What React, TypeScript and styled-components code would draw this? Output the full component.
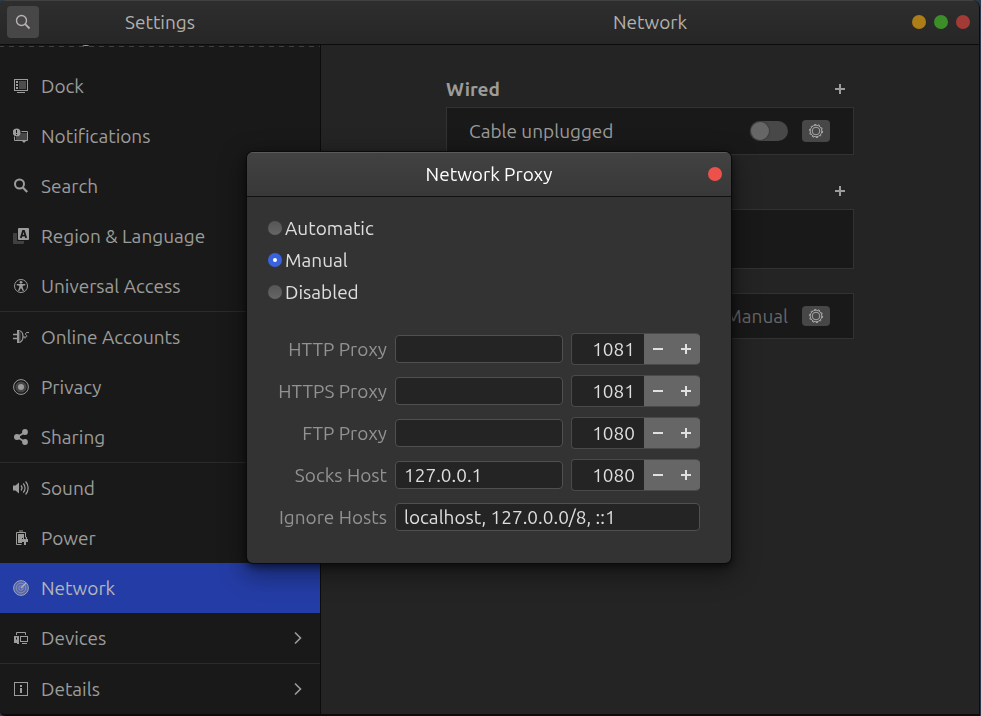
import React, { useState } from 'react';
import styled, { createGlobalStyle, css } from 'styled-components';

const GlobalStyle = createGlobalStyle`
  * { box-sizing: border-box; }
  body {
    margin: 0;
    background: #2b3a4c;
    font-family: Ubuntu, "Noto Sans", sans-serif;
    font-size: 19px;
    line-height: 24px;
    color: #9c9c9a;
  }
  button, input { font: inherit; color: inherit; margin: 0; }
  button { padding: 0; border: 0; background: none; }
`;

const Window = styled.div`
  display: grid;
  grid-template: 45px minmax(0, 1fr) / 321px minmax(0, 1fr);
  height: 100vh;
  margin-right: 1px;
  overflow: hidden;
  background: #242424;
  border-right: 1px solid #0c0c0c;
  border-bottom: 2px solid #0c0c0c;
  border-radius: 5px 8px 0 5px;
`;

const HeaderBar = styled.header<{ $main?: boolean }>`
  display: grid;
  grid-template-columns: ${p => (p.$main ? '58px 1fr 58px' : '32px 1fr 32px')};
  align-items: center;
  padding: ${p => (p.$main ? '0 9px 1px' : '0 8px 1px 7px')};
  background: linear-gradient(#2e2e2e, #262626);
  border-top: 1px solid #414141;
  border-bottom: 1px solid #0c0c0c;
`;

const Title = styled.h1<{ $bright?: boolean }>`
  grid-column: 2;
  margin: 0;
  font-size: 19px;
  font-weight: 400;
  text-align: center;
  color: ${p => (p.$bright ? '#ffffff' : '#b2b1ae')};
`;

const SearchButton = styled.button`
  display: grid;
  place-items: center;
  height: 32px;
  border-radius: 4px;
  background: #474747;
  color: #b4b3b0;
`;

const WindowControls = styled.div`
  grid-column: 3;
  display: flex;
  gap: 8px;
`;

const Dot = styled.button<{ $color: string }>`
  width: 14px;
  height: 14px;
  border-radius: 50%;
  background: ${p => p.$color};
`;

const Sidebar = styled.nav`
  position: relative;
  overflow: hidden;
  background: #191919;
  border-right: 1px solid #0c0c0c;
`;

const Undershoot = styled.div`
  position: absolute;
  top: 1px;
  left: 0;
  right: 0;
  height: 1px;
  background: repeating-linear-gradient(90deg, #404040 0 4px, transparent 4px 9px, #404040 9px 10px);
`;

/* The list is scrolled so that its first row is mostly out of view. */
const NavList = styled.ul`
  margin: -34px 0 0;
  padding: 0;
  list-style: none;
`;

const NavItem = styled.li<{ $divided?: boolean }>`
  ${p => p.$divided && css`border-top: 1px solid #2b2b2b;`}
`;

const NavLink = styled.a<{ $active?: boolean }>`
  display: grid;
  grid-template-columns: 16px 1fr 16px;
  gap: 12px;
  align-items: center;
  height: 50px;
  padding: 0 15px 0 13px;
  text-decoration: none;
  color: ${p => (p.$active ? '#b3b5bb' : '#9c9c9a')};
  background: ${p => (p.$active ? '#243da6' : 'transparent')};
`;

const Main = styled.main`
  display: flex;
  flex-direction: column;
  padding: 26px 16px;
  background: #242424;
`;

const Column = styled.div`
  width: 100%;
  max-width: 408px;
  margin: 0 auto;
`;

const Section = styled.section<{ $gap?: number }>`
  margin-top: ${p => p.$gap ?? 0}px;
`;

const SectionHead = styled.div`
  display: flex;
  align-items: center;
  justify-content: space-between;
  height: 36px;
  padding-right: 8px;
`;

const SectionTitle = styled.h2`
  margin: 0;
  font-size: 19px;
  font-weight: 700;
`;

const AddButton = styled.button`
  display: grid;
  place-items: center;
  width: 12px;
  height: 12px;
  margin-left: auto;
`;

const Panel = styled.div<{ $height: number }>`
  display: flex;
  align-items: center;
  gap: 14px;
  min-height: ${p => p.$height}px;
  padding: 0 23px 0 22px;
  background: #191919;
  border: 1px solid #323232;
`;

const Label = styled.span`
  flex: 1;
`;

const Value = styled.span`
  margin-left: auto;
  color: #676767;
`;

const Switch = styled.input`
  appearance: none;
  display: flex;
  align-items: center;
  width: 38px;
  height: 20px;
  border-radius: 10px;
  background: #484848;
  &::before {
    content: '';
    width: 18px;
    height: 18px;
    margin: 0 1px;
    border-radius: 50%;
    background: #666666;
    box-shadow: 0 0 1px 1px #3c3c3c;
  }
  &:checked { justify-content: flex-end; background: #243da6; }
`;

const GearButton = styled.button`
  display: grid;
  place-items: center;
  align-self: stretch;
  width: 28px;
  margin: 12px 0;
  border-radius: 4px;
  background: #474747;
  color: #a6a6a4;
`;

const Overlay = styled.div`
  position: fixed;
  inset: 0;
  display: grid;
  place-items: center;
  padding: 0 3px 1px 0;
`;

const Dialog = styled.section`
  width: 484px;
  max-width: 100%;
  overflow: hidden;
  border-radius: 6px;
  background: #333333;
  color: #dededc;
  box-shadow: 0 0 0 1px #0a0a0a, 0 3px 8px rgba(0, 0, 0, 0.6), 0 8px 24px 4px rgba(0, 0, 0, 0.4);
`;

const DialogHeader = styled.header`
  display: grid;
  grid-template-columns: 14px 1fr 14px;
  align-items: center;
  height: 45px;
  padding: 0 9px 1px;
  background: linear-gradient(#424242, #383838);
  border-top: 1px solid #5a5a5a;
  border-bottom: 1px solid #121212;
`;

const DialogBody = styled.form`
  padding: 15px 31px 30px 21px;
`;

const RadioGroup = styled.fieldset`
  margin: 0 0 25px;
  padding: 0;
  border: 0;
`;

const RadioLabel = styled.label`
  display: flex;
  align-items: center;
  gap: 3px;
  height: 32px;
`;

const Radio = styled.input`
  appearance: none;
  display: grid;
  place-items: center;
  width: 14px;
  height: 14px;
  border-radius: 50%;
  background: linear-gradient(#555555, #666666);
  &:checked { background: #3a62dc; }
  &:checked::before {
    content: '';
    width: 4px;
    height: 4px;
    border-radius: 50%;
    background: #ffffff;
  }
`;

const Fields = styled.div`
  display: grid;
  grid-template-columns: 1fr 168px 129px;
  grid-auto-rows: 32px;
  gap: 10px 8px;
  align-items: center;
`;

const FieldLabel = styled.label`
  text-align: right;
  white-space: nowrap;
  color: #929290;
`;

const TextBox = styled.input<{ $wide?: boolean }>`
  grid-column: ${p => (p.$wide ? 'span 2' : 'auto')};
  width: 100%;
  height: 28px;
  padding: 0 8px;
  border: 1px solid #505050;
  border-radius: 4px;
  background: #242424;
  outline: none;
`;

const Spin = styled.div`
  display: grid;
  grid-template-columns: 1fr 28px 28px;
  height: 32px;
  overflow: hidden;
  border: 1px solid #4a4a4a;
  border-right: 0;
  border-radius: 4px;
  background: #242424;
`;

const SpinInput = styled.input`
  width: 100%;
  min-width: 0;
  padding: 0 9px 0 0;
  border: 0;
  background: transparent;
  text-align: right;
  outline: none;
`;

const SpinButton = styled.button`
  display: grid;
  place-items: center;
  background: #666666;
  color: #e0e0de;
`;

const Svg = ({ size = 16, children }: { size?: number; children: React.ReactNode }) => (
  <svg width={size} height={size} viewBox={`0 0 ${size} ${size}`} fill="none" stroke="currentColor" aria-hidden="true">
    {children}
  </svg>
);

const fill = { fill: 'currentColor', stroke: 'none' };

const DockIcon = () => (
  <Svg>
    <rect x="1.5" y="1.5" width="13" height="11" />
    <path {...fill} d="M3 3h2v2H3zM3 6h2v2H3zM3 9h2v2H3zM4 14h8v1H4z" />
    <path {...fill} opacity="0.4" d="M6 3h7v8H6z" />
  </Svg>
);
const NotificationsIcon = () => (
  <Svg>
    <path {...fill} opacity="0.35" d="M3 5h11v7H3z" />
    <path d="M8.5 3.5h6v9h-13v-4" />
    <path {...fill} d="M9 13h4l-2 2z" />
    <circle {...fill} cx="3.6" cy="4.4" r="3.9" />
    <path stroke="#191919" d="M3.5 2v3M3.5 6v1" />
  </Svg>
);
const SearchIcon = () => (
  <Svg>
    <circle cx="6.5" cy="6" r="4.5" strokeWidth="2" />
    <path d="M9.8 9.5l4.4 4.5" strokeWidth="2.2" />
  </Svg>
);
const RegionIcon = () => (
  <Svg>
    <rect {...fill} opacity="0.3" y="5" width="11" height="11" rx="1" />
    <rect x="4" y="0" width="12" height="13" fill="#191919" stroke="none" />
    <rect {...fill} x="5" y="0" width="11" height="12" rx="1" />
    <path stroke="#191919" strokeWidth="1.8" d="M7.8 10l2.2-7.2h1L13.2 10M8.8 7.7h3.4" />
  </Svg>
);
const AccessIcon = () => (
  <Svg>
    <circle cx="8" cy="8" r="6.5" />
    <circle {...fill} cx="8" cy="4.3" r="1.4" />
    <path {...fill} d="M3.700 6h8.600v1.200L9.700 7.700v1.600l1.300 3.500-1 .5L8 9.900l-2 3.400-1-.5 1.300-3.500V7.700l-2.600-.5z" />
  </Svg>
);
const AccountsIcon = () => (
  <Svg>
    <path d="M0 5.500h5M0 9.500h5" strokeWidth="1.5" />
    <path d="M5 1.500v12c3.200 0 5-2.600 5-6s-1.800-6-5-6z" strokeWidth="1.2" />
    <path {...fill} opacity="0.4" d="M6 3h1.500v9H6z" />
    <path d="M5 1v13" strokeWidth="1.8" />
    <path d="M10 8h2.500c1.800 0 1.800-1.500.6-2s-.6-2.500 1-2.500H16M12 8v1.500" />
  </Svg>
);
const PrivacyIcon = () => (
  <Svg>
    <circle cx="8" cy="8" r="7.4" />
    <circle {...fill} opacity="0.35" cx="8" cy="8" r="5.6" />
    <circle {...fill} cx="8" cy="8" r="3" />
  </Svg>
);
const SharingIcon = () => (
  <Svg>
    <path d="M12 3.200L4 8l8 5" strokeWidth="1.7" />
    <circle {...fill} cx="4" cy="8" r="3" />
    <circle {...fill} cx="12" cy="3" r="2.9" />
    <circle {...fill} cx="12" cy="13" r="2.9" />
  </Svg>
);
const SoundIcon = () => (
  <Svg>
    <path {...fill} d="M0 5.500h2.500L6 2.500v11l-3.500-3H0z" />
    <path d="M8 5.500c1.300 1.500 1.300 3.500 0 5M10.200 3.500c2.500 2.600 2.500 6.400 0 9M12.600 1.500c3.400 3.900 3.400 9.100 0 13" strokeWidth="1.2" />
  </Svg>
);
const PowerIcon = () => (
  <Svg>
    <path d="M8.500 14.500h-5v-12h9v5M6 1h4" />
    <path {...fill} d="M5 4h6v4H9v5H5z" />
    <path {...fill} d="M10 7h1v2h2V7h1v2h1v3h-2v3h-2v-3H9V9h1z" />
  </Svg>
);
const NetworkIcon = () => (
  <Svg>
    <circle {...fill} opacity="0.35" cx="8" cy="8" r="7.5" />
    <circle cx="8" cy="8" r="7.4" opacity="0.8" />
    <circle cx="8" cy="8" r="4.8" opacity="0.5" />
    <circle cx="8" cy="8" r="2.3" opacity="0.5" />
    <path d="M8 8l5-5" strokeWidth="1.3" />
  </Svg>
);
const DevicesIcon = () => (
  <Svg>
    <path d="M3.500 5V2.500h9V5M4 13.500h2M9 13.500h5" />
    <path {...fill} d="M1 6h5v7H1z" />
    <path fill="#191919" stroke="none" d="M3 7.500h1v2H3z" />
    <rect x="7.5" y="6.5" width="7" height="5" />
  </Svg>
);
const DetailsIcon = () => (
  <Svg>
    <rect x="1.5" y="1.5" width="13" height="13" />
    <path {...fill} d="M7 4h2v2H7zM7 7h2v5H7z" />
  </Svg>
);
const FindIcon = () => (
  <Svg>
    <circle cx="6.5" cy="6.5" r="5" strokeWidth="1.4" />
    <path d="M10.200 10.200l4.300 4.300" strokeWidth="1.8" />
  </Svg>
);
const ChevronIcon = () => (
  <Svg>
    <path d="M6 2.500l5.500 5.500L6 13.500" strokeWidth="1.6" />
  </Svg>
);
const GearIcon = () => (
  <Svg>
    <circle cx="8" cy="8" r="6.6" strokeDasharray="2.07 2.077" />
    <circle cx="8" cy="8" r="5.8" />
    <circle cx="8" cy="8" r="3.8" />
  </Svg>
);
const PlusIcon = () => (
  <Svg size={12}>
    <path d="M1 6h10M6 1v10" strokeWidth="2" />
  </Svg>
);
const MinusIcon = () => (
  <Svg size={12}>
    <path d="M1 6h10" strokeWidth="2" />
  </Svg>
);

type Item = { label: string; icon?: React.ComponentType; divided?: boolean; active?: boolean; more?: boolean };

const items: Item[] = [
  { label: 'Background' },
  { label: 'Dock', icon: DockIcon },
  { label: 'Notifications', icon: NotificationsIcon },
  { label: 'Search', icon: SearchIcon },
  { label: 'Region & Language', icon: RegionIcon },
  { label: 'Universal Access', icon: AccessIcon },
  { label: 'Online Accounts', icon: AccountsIcon, divided: true },
  { label: 'Privacy', icon: PrivacyIcon },
  { label: 'Sharing', icon: SharingIcon },
  { label: 'Sound', icon: SoundIcon, divided: true },
  { label: 'Power', icon: PowerIcon },
  { label: 'Network', icon: NetworkIcon, active: true },
  { label: 'Devices', icon: DevicesIcon, more: true },
  { label: 'Details', icon: DetailsIcon, divided: true, more: true },
];

const proxies = [
  { id: 'http', label: 'HTTP Proxy', host: '', port: 1081 },
  { id: 'https', label: 'HTTPS Proxy', host: '', port: 1081 },
  { id: 'ftp', label: 'FTP Proxy', host: '', port: 1080 },
  { id: 'socks', label: 'Socks Host', host: '127.0.0.1', port: 1080 },
];

function ProxyRow({ id, label, host, port }: (typeof proxies)[number]) {
  const [value, setValue] = useState(port);
  return (
    <>
      <FieldLabel htmlFor={id}>{label}</FieldLabel>
      <TextBox id={id} defaultValue={host} />
      <Spin>
        <SpinInput
          aria-label={`${label} port`}
          inputMode="numeric"
          value={value}
          onChange={e => setValue(Number(e.target.value) || 0)}
        />
        <SpinButton type="button" aria-label="Decrease" onClick={() => setValue(value - 1)}><MinusIcon /></SpinButton>
        <SpinButton type="button" aria-label="Increase" onClick={() => setValue(value + 1)}><PlusIcon /></SpinButton>
      </Spin>
    </>
  );
}

export default function App() {
  const [mode, setMode] = useState('Manual');
  return (
    <>
      <GlobalStyle />
      <Window>
        <HeaderBar>
          <SearchButton aria-label="Search settings"><FindIcon /></SearchButton>
          <Title>Settings</Title>
        </HeaderBar>
        <HeaderBar $main>
          <Title>Network</Title>
          <WindowControls>
            <Dot $color="#ad7d18" aria-label="Minimize" />
            <Dot $color="#3c8e28" aria-label="Maximize" />
            <Dot $color="#a33a35" aria-label="Close" />
          </WindowControls>
        </HeaderBar>
        <Sidebar>
          <NavList>
            {items.map(({ label, icon: Icon, divided, active, more }) => (
              <NavItem key={label} $divided={divided}>
                <NavLink href="#" $active={active} aria-current={active ? 'page' : undefined}>
                  {Icon ? <Icon /> : <i />}
                  <span>{label}</span>
                  {more && <ChevronIcon />}
                </NavLink>
              </NavItem>
            ))}
          </NavList>
          <Undershoot />
        </Sidebar>
        <Main>
          <Column>
            <Section>
              <SectionHead>
                <SectionTitle>Wired</SectionTitle>
                <AddButton aria-label="Add wired connection"><PlusIcon /></AddButton>
              </SectionHead>
              <Panel $height={48}>
                <Label>Cable unplugged</Label>
                <Switch type="checkbox" role="switch" aria-label="Wired connection" />
                <GearButton aria-label="Wired options"><GearIcon /></GearButton>
              </Panel>
            </Section>
            <Section $gap={18} aria-label="VPN">
              <SectionHead>
                <AddButton aria-label="Add VPN"><PlusIcon /></AddButton>
              </SectionHead>
              <Panel $height={60} />
            </Section>
            <Section $gap={24} aria-label="Network proxy">
              <Panel $height={46}>
                <Value>Manual</Value>
                <GearButton aria-label="Proxy options"><GearIcon /></GearButton>
              </Panel>
            </Section>
          </Column>
        </Main>
      </Window>
      <Overlay>
        <Dialog role="dialog" aria-modal="true" aria-labelledby="dialog-title">
          <DialogHeader>
            <Title as="h2" id="dialog-title" $bright>Network Proxy</Title>
            <Dot $color="#ec524b" aria-label="Close dialog" />
          </DialogHeader>
          <DialogBody onSubmit={e => e.preventDefault()}>
            <RadioGroup aria-label="Proxy mode">
              {['Automatic', 'Manual', 'Disabled'].map(name => (
                <RadioLabel key={name}>
                  <Radio type="radio" name="mode" checked={mode === name} onChange={() => setMode(name)} />
                  {name}
                </RadioLabel>
              ))}
            </RadioGroup>
            <Fields>
              {proxies.map(p => <ProxyRow key={p.id} {...p} />)}
              <FieldLabel htmlFor="ignore">Ignore Hosts</FieldLabel>
              <TextBox id="ignore" $wide defaultValue="localhost, 127.0.0.0/8, ::1" />
            </Fields>
          </DialogBody>
        </Dialog>
      </Overlay>
    </>
  );
}
